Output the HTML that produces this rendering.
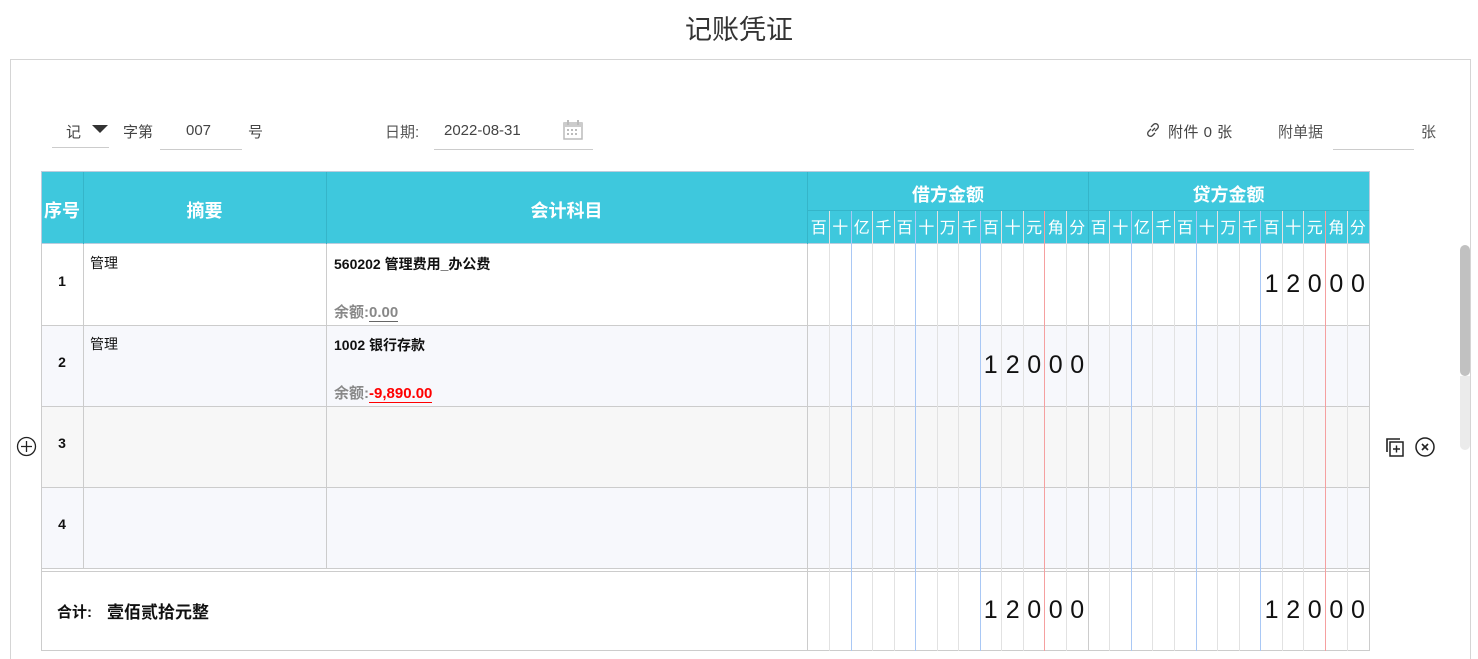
<!DOCTYPE html>
<html><head><meta charset="utf-8"><style>
*{margin:0;padding:0;box-sizing:border-box}
body{width:1478px;height:654px;overflow:hidden;background:#fff;position:relative;font-family:"Liberation Sans","Noto Sans CJK SC",sans-serif;color:#333}
.a{position:absolute}
.t{position:absolute;white-space:nowrap}
.vl{position:absolute;width:1px}
.hl{position:absolute;height:1px;background:#ccc}
.hd{position:absolute;color:#fff;font-weight:bold;font-size:18px;text-align:center}
.dg{position:absolute;top:214px;width:21.5px;text-align:center;color:#fff;font-size:16px}
.num{position:absolute;width:21.5px;text-align:center;font-size:25px;color:#111}
.b{font-weight:bold;font-size:14px;color:#111}
</style></head><body>
<div class="t" style="left:0;width:1478px;text-align:center;top:8px;font-size:27px;color:#333">记账凭证</div>
<div class="a" style="left:10px;top:59px;width:1461px;height:600px;border:1px solid #d5d5d5;border-bottom:none"></div>

<div class="t" style="left:66px;top:121px;font-size:15px;color:#444">记</div>
<div class="a" style="left:92px;top:125px;width:0;height:0;border-left:8px solid transparent;border-right:8px solid transparent;border-top:8px solid #333"></div>
<div class="a" style="left:52px;top:147px;width:57px;height:1px;background:#ccc"></div>
<div class="t" style="left:123px;top:121px;font-size:15px;color:#444">字第</div>
<div class="t" style="left:186px;top:122px;font-size:15px;color:#444">007</div>
<div class="a" style="left:160px;top:149px;width:82px;height:1px;background:#ccc"></div>
<div class="t" style="left:248px;top:121px;font-size:15px;color:#444">号</div>
<div class="t" style="left:385px;top:121px;font-size:15px;color:#555">日期:</div>
<div class="t" style="left:444px;top:122px;font-size:15px;color:#444">2022-08-31</div>
<svg class="a" style="left:562px;top:119px" width="22" height="22" viewBox="0 0 22 22"><rect x="2" y="4" width="18" height="16" fill="none" stroke="#bbb" stroke-width="1.5"/><rect x="2" y="4" width="18" height="4" fill="#ccc"/><line x1="6" y1="1" x2="6" y2="6" stroke="#bbb" stroke-width="2"/><line x1="16" y1="1" x2="16" y2="6" stroke="#bbb" stroke-width="2"/><g fill="#bbb"><rect x="5" y="10" width="2" height="2"/><rect x="9" y="10" width="2" height="2"/><rect x="13" y="10" width="2" height="2"/><rect x="5" y="14" width="2" height="2"/><rect x="9" y="14" width="2" height="2"/><rect x="13" y="14" width="2" height="2"/></g></svg>
<div class="a" style="left:434px;top:149px;width:159px;height:1px;background:#ccc"></div>
<svg class="a" style="left:1145px;top:122px" width="16" height="16" viewBox="0 0 16 16"><path d="M7 9 L10 6 M6 5 L8.5 2.5 a2.5 2.5 0 0 1 4 4 L10 9 M10 11 L7.5 13.5 a2.5 2.5 0 0 1 -4 -4 L6 7" fill="none" stroke="#444" stroke-width="1.3"/></svg>
<div class="t" style="left:1168px;top:121px;font-size:15px;color:#444;letter-spacing:0.5px">附件 0 张</div>
<div class="t" style="left:1278px;top:121px;font-size:15px;color:#555">附单据</div>
<div class="a" style="left:1333px;top:149px;width:81px;height:1px;background:#ccc"></div>
<div class="t" style="left:1421px;top:121px;font-size:15px;color:#555">张</div>

<div class="a" style="left:41px;top:171px;width:1329px;height:73px;background:#3ec8dd;border:1px solid #bcd"></div>
<div class="vl" style="left:83px;top:172px;height:72px;background:#35b5c9"></div>
<div class="vl" style="left:326px;top:172px;height:72px;background:#35b5c9"></div>
<div class="vl" style="left:807px;top:172px;height:72px;background:#35b5c9"></div>
<div class="vl" style="left:1088px;top:172px;height:72px;background:#35b5c9"></div>
<div class="a" style="left:808px;top:210px;width:561px;height:1px;background:#35b5c9"></div>
<div class="hd" style="left:41px;width:42px;top:197px">序号</div>
<div class="hd" style="left:83px;width:243px;top:197px">摘要</div>
<div class="hd" style="left:326px;width:481px;top:197px">会计科目</div>
<div class="hd" style="left:808px;width:280px;top:181px">借方金额</div>
<div class="hd" style="left:1088px;width:281px;top:181px">贷方金额</div>

<div class="dg" style="left:808px">百</div><div class="dg" style="left:829.5px">十</div><div class="dg" style="left:851px">亿</div><div class="dg" style="left:872.6px">千</div><div class="dg" style="left:894px">百</div><div class="dg" style="left:915.7px">十</div><div class="dg" style="left:937px">万</div><div class="dg" style="left:958.8px">千</div><div class="dg" style="left:980px">百</div><div class="dg" style="left:1001.9px">十</div><div class="dg" style="left:1023.4px">元</div><div class="dg" style="left:1045px">角</div><div class="dg" style="left:1066.5px">分</div>
<div class="dg" style="left:1088px">百</div><div class="dg" style="left:1109.6px">十</div><div class="dg" style="left:1131.2px">亿</div><div class="dg" style="left:1152.8px">千</div><div class="dg" style="left:1174.4px">百</div><div class="dg" style="left:1196px">十</div><div class="dg" style="left:1217.6px">万</div><div class="dg" style="left:1239.2px">千</div><div class="dg" style="left:1260.8px">百</div><div class="dg" style="left:1282.4px">十</div><div class="dg" style="left:1304px">元</div><div class="dg" style="left:1325.6px">角</div><div class="dg" style="left:1347.2px">分</div>

<div class="a" style="left:41px;top:325px;width:1329px;height:81px;background:#f7f8fc"></div>
<div class="a" style="left:41px;top:406px;width:1329px;height:81px;background:#f7f7f7"></div>
<div class="a" style="left:41px;top:487px;width:1329px;height:81px;background:#f7f8fc"></div>

<div class="hl" style="left:41px;top:325px;width:1329px"></div>
<div class="hl" style="left:41px;top:406px;width:1329px"></div>
<div class="hl" style="left:41px;top:487px;width:1329px"></div>
<div class="hl" style="left:41px;top:568px;width:1329px"></div>
<div class="hl" style="left:41px;top:571px;width:1329px"></div>
<div class="hl" style="left:41px;top:650px;width:1329px"></div>

<div class="vl" style="left:41px;top:244px;height:407px;background:#ccc"></div>
<div class="vl" style="left:83px;top:244px;height:325px;background:#ccc"></div>
<div class="vl" style="left:326px;top:244px;height:325px;background:#ccc"></div>
<div class="vl" style="left:807px;top:244px;height:407px;background:#ccc"></div>
<div class="vl" style="left:1088px;top:244px;height:407px;background:#ccc"></div>
<div class="vl" style="left:1369px;top:244px;height:407px;background:#ccc"></div>

<div class="vl" style="left:829px;top:211px;height:440px;background:#e2e2e2"></div>
<div class="vl" style="left:851px;top:211px;height:440px;background:#a9c8f5"></div>
<div class="vl" style="left:872px;top:211px;height:440px;background:#e2e2e2"></div>
<div class="vl" style="left:894px;top:211px;height:440px;background:#e2e2e2"></div>
<div class="vl" style="left:915px;top:211px;height:440px;background:#a9c8f5"></div>
<div class="vl" style="left:937px;top:211px;height:440px;background:#e2e2e2"></div>
<div class="vl" style="left:958px;top:211px;height:440px;background:#e2e2e2"></div>
<div class="vl" style="left:980px;top:211px;height:440px;background:#a9c8f5"></div>
<div class="vl" style="left:1001px;top:211px;height:440px;background:#e2e2e2"></div>
<div class="vl" style="left:1023px;top:211px;height:440px;background:#e2e2e2"></div>
<div class="vl" style="left:1044px;top:211px;height:440px;background:#f5a0a0"></div>
<div class="vl" style="left:1066px;top:211px;height:440px;background:#e2e2e2"></div>

<div class="vl" style="left:1109px;top:211px;height:440px;background:#e2e2e2"></div>
<div class="vl" style="left:1131px;top:211px;height:440px;background:#a9c8f5"></div>
<div class="vl" style="left:1152px;top:211px;height:440px;background:#e2e2e2"></div>
<div class="vl" style="left:1174px;top:211px;height:440px;background:#e2e2e2"></div>
<div class="vl" style="left:1196px;top:211px;height:440px;background:#a9c8f5"></div>
<div class="vl" style="left:1217px;top:211px;height:440px;background:#e2e2e2"></div>
<div class="vl" style="left:1239px;top:211px;height:440px;background:#e2e2e2"></div>
<div class="vl" style="left:1260px;top:211px;height:440px;background:#a9c8f5"></div>
<div class="vl" style="left:1282px;top:211px;height:440px;background:#e2e2e2"></div>
<div class="vl" style="left:1303px;top:211px;height:440px;background:#e2e2e2"></div>
<div class="vl" style="left:1325px;top:211px;height:440px;background:#f5a0a0"></div>
<div class="vl" style="left:1347px;top:211px;height:440px;background:#e2e2e2"></div>

<div class="t b" style="left:41px;width:42px;text-align:center;top:273px">1</div>
<div class="t b" style="left:41px;width:42px;text-align:center;top:354px">2</div>
<div class="t b" style="left:41px;width:42px;text-align:center;top:435px">3</div>
<div class="t b" style="left:41px;width:42px;text-align:center;top:516px">4</div>
<div class="t b" style="left:90px;top:253px;font-weight:normal">管理</div>
<div class="t b" style="left:90px;top:334px;font-weight:normal">管理</div>
<div class="t b" style="left:334px;top:254px">560202 管理费用_办公费</div>
<div class="t b" style="left:334px;top:335px">1002 银行存款</div>
<div class="t" style="left:334px;top:301px;font-size:15px;color:#888;font-weight:bold">余额:<span style="border-bottom:1px solid #666">0.00</span></div>
<div class="t" style="left:334px;top:382px;font-size:15px;color:#888;font-weight:bold">余额:<span style="color:#f00;border-bottom:1px solid #f00">-9,890.00</span></div>

<div class="num" style="left:1260.8px;top:270px">1</div><div class="num" style="left:1282.4px;top:270px">2</div><div class="num" style="left:1304px;top:270px">0</div><div class="num" style="left:1325.6px;top:270px">0</div><div class="num" style="left:1347.2px;top:270px">0</div>
<div class="num" style="left:980px;top:351px">1</div><div class="num" style="left:1001.9px;top:351px">2</div><div class="num" style="left:1023.4px;top:351px">0</div><div class="num" style="left:1045px;top:351px">0</div><div class="num" style="left:1066.5px;top:351px">0</div>
<div class="num" style="left:980px;top:596px">1</div><div class="num" style="left:1001.9px;top:596px">2</div><div class="num" style="left:1023.4px;top:596px">0</div><div class="num" style="left:1045px;top:596px">0</div><div class="num" style="left:1066.5px;top:596px">0</div>
<div class="num" style="left:1260.8px;top:596px">1</div><div class="num" style="left:1282.4px;top:596px">2</div><div class="num" style="left:1304px;top:596px">0</div><div class="num" style="left:1325.6px;top:596px">0</div><div class="num" style="left:1347.2px;top:596px">0</div>

<div class="t" style="left:57px;top:601px;font-size:15px;font-weight:bold;color:#111">合计:</div>
<div class="t" style="left:107px;top:598px;font-size:17px;font-weight:bold;color:#111">壹佰贰拾元整</div>

<svg class="a" style="left:16px;top:436px" width="21" height="21" viewBox="0 0 21 21"><circle cx="10.5" cy="10.5" r="9" fill="none" stroke="#222" stroke-width="1.3"/><path d="M10.5 5v11M5 10.5h11" stroke="#222" stroke-width="1.3"/></svg>
<svg class="a" style="left:1385px;top:436px" width="22" height="22" viewBox="0 0 22 22"><path d="M2 16V3h13" fill="none" stroke="#222" stroke-width="1.6"/><rect x="5" y="6" width="13" height="14" fill="none" stroke="#222" stroke-width="1.5"/><path d="M11.5 9.5v7M8 13h7" stroke="#222" stroke-width="1.4"/></svg>
<svg class="a" style="left:1414px;top:436px" width="22" height="22" viewBox="0 0 22 22"><circle cx="11" cy="11" r="9" fill="none" stroke="#222" stroke-width="1.5"/><path d="M8 8l6 6M14 8l-6 6" stroke="#222" stroke-width="1.6"/></svg>

<div class="a" style="left:1459px;top:244px;width:11px;height:410px;background:#fff"></div>
<div class="a" style="left:1460px;top:245px;width:10px;height:131px;background:#c1c1c1;border-radius:5px"></div>
<div class="a" style="left:1460px;top:376px;width:10px;height:74px;background:#ebebeb;border-radius:0 0 5px 5px"></div>
</body></html>
